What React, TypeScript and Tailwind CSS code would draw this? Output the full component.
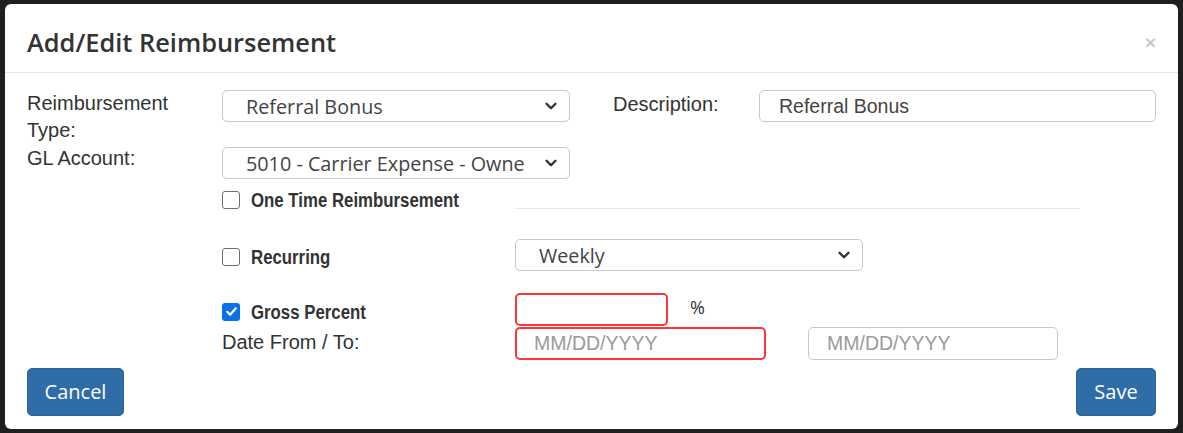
import React from "react"
import { ChevronDown } from "lucide-react"

const arial = "font-['Liberation_Sans',Arial,sans-serif]"
const openSans = "font-['Open_Sans',sans-serif]"

function Select({ value, width }: { value: string; width: string }) {
  return (
    <div
      className={`${width} h-[32px] flex items-center justify-between border border-[#c8c8c8] rounded-[5px] bg-white pl-[23px] pr-[9px] ${openSans} text-[19.8px] text-[#444]`}
    >
      <span className="whitespace-nowrap overflow-hidden pt-[2px]">{value}</span>
      <ChevronDown size={18} strokeWidth={3.2} className="text-[#333] shrink-0" />
    </div>
  )
}

// the original uses a narrow bold face; squeeze Liberation Sans bold to match
function Checkbox({ checked = false, label }: { checked?: boolean; label: string }) {
  return (
    <div className="flex items-center gap-[11px]">
      {checked ? (
        <span className="w-[18px] h-[18px] shrink-0 rounded-[3px] bg-[#0b72e6] flex items-center justify-center">
          <svg width="13" height="13" viewBox="0 0 13 13">
            <path d="M2.2 6.8 L5.2 9.7 L10.8 3.3" fill="none" stroke="white" strokeWidth="2.2" strokeLinecap="round" strokeLinejoin="round" />
          </svg>
        </span>
      ) : (
        <span className="w-[18px] h-[18px] shrink-0 rounded-[3px] border-[1.5px] border-[#6f6f6f] bg-white" />
      )}
      <span className={`${arial} font-bold text-[20px] text-[#333] leading-none whitespace-nowrap inline-block origin-left scale-x-[0.84]`}>
        {label}
      </span>
    </div>
  )
}

export default function App() {
  return (
    <div className="w-[1183px] h-[433px] bg-[#1f1f1f] pt-[4px] pl-[5px]">
      <div className="w-[1173px] h-[425px] bg-white rounded-[6px] flex flex-col">
        {/* header */}
        <div className="h-[69px] shrink-0 border-b border-[#e5e5e5] flex items-center justify-between pl-[22px] pr-[22px] pt-[8px]">
          <h4 className={`${openSans} font-semibold text-[25.4px] text-[#333]`}>Add/Edit Reimbursement</h4>
          <span className={`${arial} font-bold text-[19px] text-[#cacaca] leading-none`}>×</span>
        </div>

        {/* body */}
        <div className={`flex flex-col pt-[17px] px-[22px] ${arial} text-[20px] text-[#333]`}>
          <div className="h-[57px] flex items-start">
            <div className="w-[195px]">
              <div className="w-[150px] leading-[27px]">Reimbursement Type:</div>
            </div>
            <Select value="Referral Bonus" width="w-[348px]" />
            <div className="ml-[43px] w-[146px] -mt-[1px] leading-[30px]">Description:</div>
            <div className="w-[397px] h-[32px] border border-[#c8c8c8] rounded-[5px] flex items-center pl-[19px] pt-[1px] text-[19.5px] text-[#444]">
              Referral Bonus
            </div>
          </div>

          <div className="h-[32px] flex items-start">
            <div className="w-[195px] -mt-[4px] leading-[30px]">GL Account:</div>
            <Select value="5010 - Carrier Expense - Owne" width="w-[348px]" />
          </div>

          <div className="h-[30px] flex items-start pl-[195px]">
            <div className="w-[293px] mt-[11px]">
              <Checkbox label="One Time Reimbursement" />
            </div>
            <div className="w-[565px] h-[1px] bg-[#e6e6e6] mt-[29px]" />
          </div>

          <div className="mt-[30px] h-[32px] flex items-center pl-[195px]">
            <div className="w-[293px] mt-[3px]">
              <Checkbox label="Recurring" />
            </div>
            <Select value="Weekly" width="w-[348px]" />
          </div>

          <div className="mt-[22px] h-[33px] flex items-center pl-[195px]">
            <div className="w-[293px] mt-[4px]">
              <Checkbox checked label="Gross Percent" />
            </div>
            <div className="w-[153px] h-[33px] border-2 border-[#ff3434] rounded-[5px]" />
            <span className={`ml-[22px] -mt-[4px] ${openSans} text-[18px] text-[#333]`}>%</span>
          </div>

          <div className="mt-[1px] h-[33px] flex items-center pl-[195px]">
            <div className="w-[293px] -mt-[3px]">Date From / To:</div>
            <div className="w-[251px] h-[33px] border-2 border-[#ff3434] rounded-[5px] flex items-center pl-[17px] text-[19.5px] text-[#9a9a9a]">
              MM/DD/YYYY
            </div>
            <div className="ml-[42px] w-[250px] h-[33px] border border-[#c8c8c8] rounded-[5px] flex items-center pl-[18px] text-[19.5px] text-[#9a9a9a]">
              MM/DD/YYYY
            </div>
          </div>

          <div className="mt-[8px] flex items-center justify-between">
            <button className={`w-[97px] h-[48px] rounded-[5px] bg-[#2e6da7] border border-[#2a6499] text-white ${openSans} text-[20px]`}>
              Cancel
            </button>
            <button className={`w-[80px] h-[48px] rounded-[5px] bg-[#2e6da7] border border-[#2a6499] text-white ${openSans} text-[20px]`}>
              Save
            </button>
          </div>
        </div>
      </div>
    </div>
  )
}
